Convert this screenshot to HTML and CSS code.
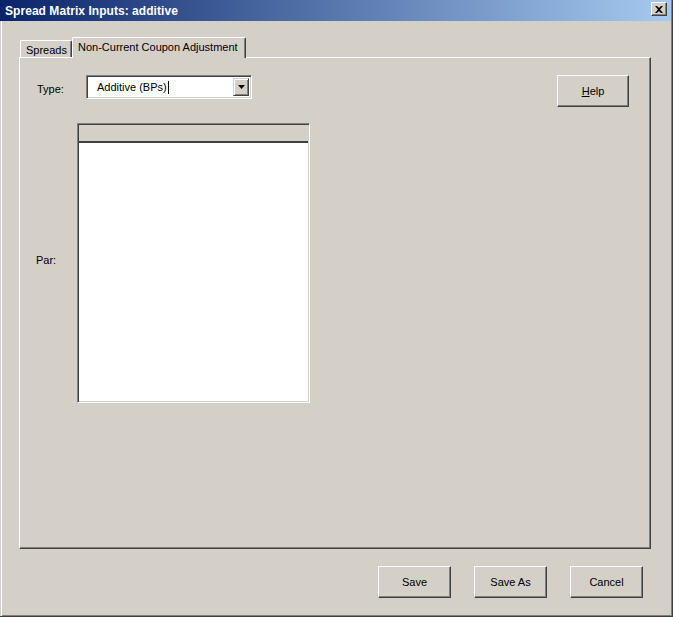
FILE: index.html
```html
<!DOCTYPE html>
<html>
<head>
<meta charset="utf-8">
<link rel="stylesheet" href="styles.css">
</head>
<body>
<div class="window">
  <div class="titlebar">
    <span class="title">Spread Matrix Inputs: additive</span>
    <span class="close"><svg width="8" height="7" viewBox="0 0 8 7"><path d="M0 0h2l2 2 2-2h2L5 3.5 8 7H6L4 5 2 7H0l3-3.5z" fill="#000"/></svg></span>
  </div>
  <div class="body">
    <div class="tabs">
      <div class="tab first">Spreads</div>
      <div class="tab active">Non-Current Coupon Adjustment</div>
    </div>
    <div class="panel">
      <div class="row1">
        <div class="field">
          <span class="label type-label">Type:</span>
          <div class="combo">
            <span class="combo-text">Additive (BPs)<span class="caret"></span></span>
            <span class="drop"><svg width="7" height="4" viewBox="0 0 7 4"><path d="M0 0h7L3.5 4z" fill="#000"/></svg></span>
          </div>
        </div>
        <button class="btn help"><u>H</u>elp</button>
      </div>
      <div class="row2">
        <span class="label par-label">Par:</span>
        <div class="grid">
          <div class="grid-head"></div>
          <div class="grid-body"></div>
        </div>
      </div>
    </div>
    <div class="footer">
      <button class="btn">Save</button>
      <button class="btn">Save As</button>
      <button class="btn">Cancel</button>
    </div>
  </div>
</div>
</body>
</html>
```
FILE: styles.css
```css
html, body {
  margin: 0;
  padding: 0;
  background: #d4d0c8;
}
body {
  font-family: "Liberation Sans", Arial, sans-serif;
  font-size: 11px;
  color: #000;
}
.window {
  width: 673px;
  height: 617px;
  box-sizing: border-box;
  background: #d4d0c8;
  border-right: 1px solid #404040;
  border-bottom: 1px solid #404040;
  box-shadow: inset 1px 0 0 #d4d0c8, inset 2px 0 0 #fff, inset -1px 0 0 #808080, inset 0 -1px 0 #808080;
  display: flex;
  flex-direction: column;
}
.titlebar {
  height: 21px;
  margin-right: 1px;
  background: linear-gradient(to right, #0a246a, #a6caf0);
  display: flex;
  align-items: center;
  justify-content: space-between;
  padding: 0 4px 0 5px;
}
.title {
  color: #fff;
  font-weight: bold;
  font-size: 12px;
  letter-spacing: 0.05px;
}
.close {
  width: 16px;
  height: 14px;
  box-sizing: border-box;
  background: #d4d0c8;
  border-top: 1px solid #fff;
  border-left: 1px solid #fff;
  border-right: 1px solid #404040;
  border-bottom: 1px solid #404040;
  box-shadow: inset -1px -1px 0 #808080;
  display: flex;
  align-items: center;
  justify-content: center;
  margin-top: -3px;
}
.body {
  padding: 16px 0 0 19px;
  display: flex;
  flex-direction: column;
}
.tabs {
  display: flex;
  align-items: flex-end;
  height: 20px;
  position: relative;
  z-index: 1;
}
.tab {
  box-sizing: border-box;
  height: 17px;
  padding: 3px 6px 0 5px;
  border-top: 1px solid #fff;
  border-left: 1px solid #fff;
  border-right: 1px solid #404040;
  box-shadow: inset -1px 0 0 #808080;
  border-top-left-radius: 2px;
  border-top-right-radius: 2px;
  background: #d4d0c8;
  white-space: nowrap;
}
.tab.first {
  margin-left: 1px;
  width: 52px;
  padding-left: 5px;
}
.tab.active {
  height: 21px;
  margin-bottom: -1px;
  padding: 3px 8px 0 5px;
  width: 174px;
}
.panel {
  width: 632px;
  height: 492px;
  box-sizing: border-box;
  border-top: 1px solid #fff;
  border-left: 1px solid #fff;
  border-right: 1px solid #404040;
  border-bottom: 1px solid #404040;
  box-shadow: inset -1px -1px 0 #808080;
  padding: 17px 21px 0 17px;
}
.row1 {
  display: flex;
  justify-content: space-between;
  align-items: flex-start;
}
.field {
  display: flex;
  align-items: flex-start;
}
.label {
  white-space: nowrap;
}
.type-label {
  width: 49px;
  padding-top: 8px;
}
.combo {
  width: 166px;
  height: 24px;
  box-sizing: border-box;
  background: #fff;
  border-top: 1px solid #808080;
  border-left: 1px solid #808080;
  border-right: 1px solid #fff;
  border-bottom: 1px solid #fff;
  box-shadow: inset 1px 1px 0 #404040, inset -1px -1px 0 #d4d0c8;
  display: flex;
  align-items: center;
  justify-content: space-between;
  padding: 2px 2px 2px 10px;
}
.combo-text {
  display: flex;
  align-items: center;
}
.caret {
  display: inline-block;
  width: 1px;
  height: 13px;
  background: #000;
  margin-left: 1px;
}
.drop {
  width: 16px;
  height: 18px;
  box-sizing: border-box;
  background: #d4d0c8;
  border-top: 1px solid #d4d0c8;
  border-left: 1px solid #d4d0c8;
  border-right: 1px solid #404040;
  border-bottom: 1px solid #404040;
  box-shadow: inset 1px 1px 0 #fff, inset -1px -1px 0 #808080;
  display: flex;
  align-items: center;
  justify-content: center;
}
.btn {
  font-family: "Liberation Sans", Arial, sans-serif;
  font-size: 11px;
  color: #000;
  width: 73px;
  height: 32px;
  box-sizing: border-box;
  background: #d4d0c8;
  border-top: 1px solid #fff;
  border-left: 1px solid #fff;
  border-right: 1px solid #404040;
  border-bottom: 1px solid #404040;
  box-shadow: inset -1px -1px 0 #808080;
  padding: 0;
  margin: 0;
}
.help {
  width: 72px;
}
.row2 {
  display: flex;
  align-items: center;
  margin-top: 16px;
}
.par-label {
  width: 41px;
  margin-left: -1px;
  margin-top: -6px;
}
.grid {
  width: 233px;
  height: 280px;
  box-sizing: border-box;
  background: #fff;
  border-top: 1px solid #808080;
  border-left: 1px solid #808080;
  border-right: 1px solid #fff;
  border-bottom: 1px solid #fff;
  box-shadow: inset 1px 1px 0 #404040, inset -1px -1px 0 #d4d0c8;
  padding: 1px;
  display: flex;
  flex-direction: column;
}
.grid-head {
  height: 18px;
  background: #d4d0c8;
  border-bottom: 2px solid #404040;
  box-sizing: border-box;
}
.grid-body {
  flex: 1;
  background: #fff;
}
.footer {
  display: flex;
  justify-content: flex-end;
  gap: 23px;
  margin-top: 17px;
  padding-right: 29px;
}
```
